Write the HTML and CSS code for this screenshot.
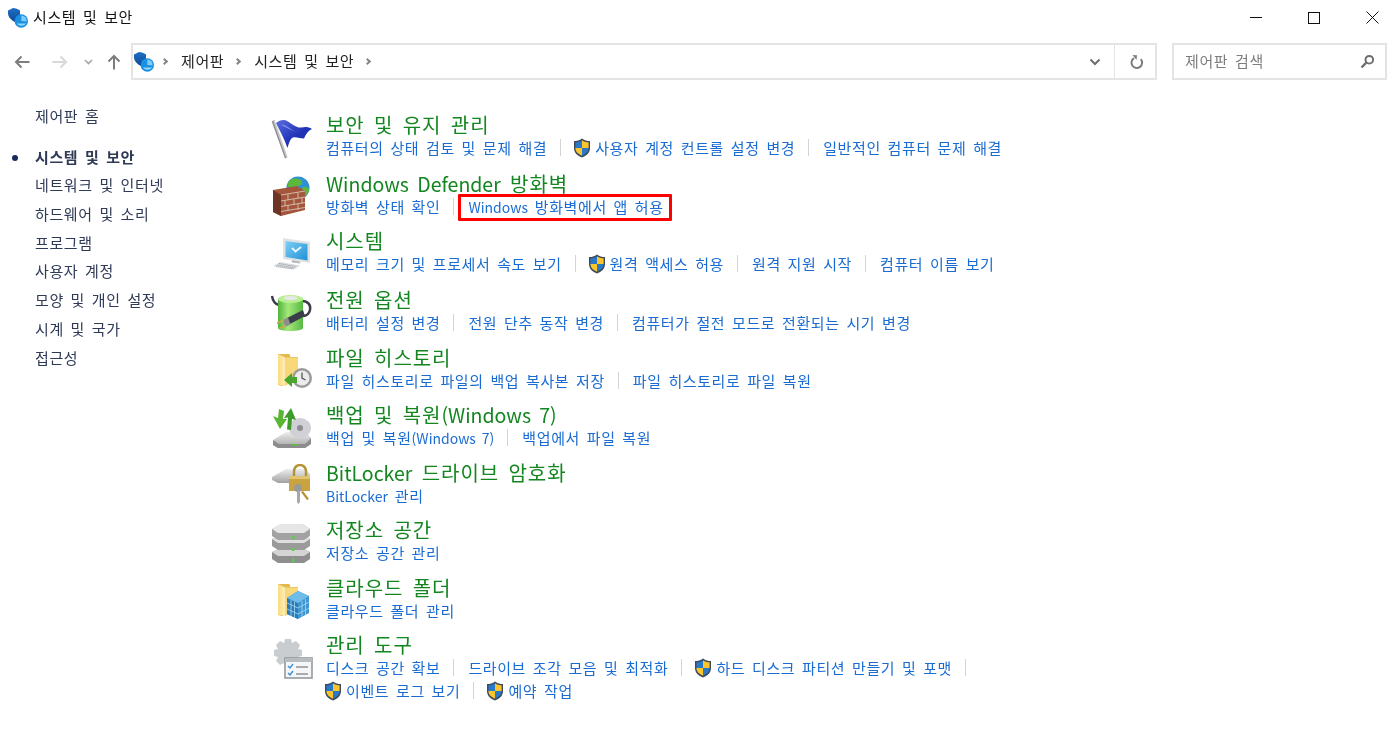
FILE: index.html
```html
<!DOCTYPE html>
<html lang="ko">
<head>
<meta charset="utf-8">
<title>시스템 및 보안</title>
<link rel="stylesheet" href="styles.css">
</head>
<body>
<svg class="defs" width="0" height="0" aria-hidden="true">
  <defs>
    <linearGradient id="gBlue" x1="0" y1="0" x2="0" y2="1"><stop offset="0" stop-color="#1f6fc4"/><stop offset="1" stop-color="#0b4590"/></linearGradient>
    <linearGradient id="gFlag" x1="0" y1="0" x2="1" y2="1"><stop offset="0" stop-color="#5a6fe0"/><stop offset=".55" stop-color="#2233b8"/><stop offset="1" stop-color="#1a2a9e"/></linearGradient>
    <linearGradient id="gFolder" x1="0" y1="0" x2="1" y2="0"><stop offset="0" stop-color="#f9dc80"/><stop offset="1" stop-color="#fdeeb6"/></linearGradient>
    <linearGradient id="gGreen" x1="0" y1="0" x2="1" y2="0"><stop offset="0" stop-color="#4fb33c"/><stop offset=".4" stop-color="#a5e87a"/><stop offset="1" stop-color="#57b844"/></linearGradient>
    <linearGradient id="gDisk" x1="0" y1="0" x2="0" y2="1"><stop offset="0" stop-color="#ededed"/><stop offset="1" stop-color="#a2a2a2"/></linearGradient>
    <linearGradient id="gScreen" x1="0" y1="0" x2="1" y2="1"><stop offset="0" stop-color="#7fd0f5"/><stop offset="1" stop-color="#1f8fd6"/></linearGradient>
    <symbol id="shield" viewBox="0 0 18 20">
      <path d="M9 .5C6.500 2.500 4 3 1 3v7c0 5 3.500 7.700 8 9.500 4.500-1.800 8-4.500 8-9.500V3c-3 0-5.500-.5-8-2.500z" fill="#3d4a5c"/>
      <path d="M9 2.200V10H2.400V4.300C5 4.200 7 3.600 9 2.200z" fill="#2b78c8"/>
      <path d="M9 2.200V10h6.600V4.300C13 4.200 11 3.600 9 2.200z" fill="#fbc62c"/>
      <path d="M9 10H2.400c.1 3.800 2.800 6 6.600 7.800z" fill="#fbc62c"/>
      <path d="M9 10h6.600c-.1 3.800-2.800 6-6.600 7.800z" fill="#2b78c8"/>
    </symbol>
    <symbol id="cp" viewBox="0 0 20 20">
      <path d="M0 2.500 5 0c2.500.2 5 1 7 2.500V9l3 3-4 4-6-3C2 11 0 8 0 5.500z" fill="url(#gBlue)"/>
      <circle cx="13.300" cy="13" r="6.700" fill="#1b8fe0"/>
      <path d="M13.300 13V7.500a5.500 5.500 0 0 1 5.300 6z" fill="#7fcdf6"/>
      <path d="M8.800 15.500h9.500a6 6 0 0 1-9.500 0z" fill="#8fd8f8"/>
    </symbol>
    <symbol id="folder" viewBox="0 0 44 44">
      <path d="M8 5h11.500l1 3H28v22L12 37l-4-1z" fill="#e3b94f"/>
      <path d="M8 5l7 3.500V37l-7-1.500z" fill="url(#gFolder)"/>
      <path d="M15 8.500h13V30l-13 7z" fill="#f8d878"/>
    </symbol>
  </defs>
</svg>

<header class="titlebar">
  <div class="title">
    <svg class="title-icon"><use href="#cp"/></svg>
    <span class="title-text">시스템 및 보안</span>
  </div>
  <div class="winbtns">
    <button class="winbtn" aria-label="최소화"><svg width="12" height="12" viewBox="0 0 12 12"><path d="M0 5.500h12" stroke="#111" fill="none"/></svg></button>
    <button class="winbtn" aria-label="최대화"><svg width="12" height="12" viewBox="0 0 12 12"><rect x=".5" y=".5" width="11" height="11" stroke="#111" fill="none"/></svg></button>
    <button class="winbtn" aria-label="닫기"><svg width="13" height="13" viewBox="0 0 13 13"><path d="M.5.500l12 12M12.500.500l-12 12" stroke="#111" fill="none"/></svg></button>
  </div>
</header>

<nav class="toolbar">
  <div class="navbtns">
    <svg class="nav-back" width="16" height="14" viewBox="0 0 16 14"><path d="M15.500 7H2M7.500 1.500 2 7l5.500 5.500" stroke="#7d7d7d" stroke-width="2" fill="none"/></svg>
    <svg class="nav-forward" width="16" height="14" viewBox="0 0 16 14"><path d="M.5 7H14M8.500 1.500 14 7l-5.500 5.500" stroke="#d8d8d8" stroke-width="2" fill="none"/></svg>
    <svg class="nav-down" width="9" height="6" viewBox="0 0 9 6"><path d="M1 1l3.500 3.500L8 1" stroke="#a6a6a6" stroke-width="1.600" fill="none"/></svg>
    <svg class="nav-up" width="14" height="16" viewBox="0 0 14 16"><path d="M7 15.500V2M1.500 7.500 7 2l5.500 5.500" stroke="#7d7d7d" stroke-width="2" fill="none"/></svg>
  </div>
  <div class="address">
    <svg class="addr-icon"><use href="#cp"/></svg>
    <span class="crumb-sep"></span>
    <span class="crumb">제어판</span>
    <span class="crumb-sep"></span>
    <span class="crumb">시스템 및 보안</span>
    <span class="crumb-sep"></span>
    <span class="addr-fill"></span>
    <svg class="addr-down" width="12" height="8" viewBox="0 0 12 8"><path d="M1.500 1.500 6 6l4.500-4.500" stroke="#6f6f6f" stroke-width="2" fill="none"/></svg>
    <span class="addr-refresh">
      <svg width="14" height="16" viewBox="0 0 14 16"><path d="M10.800 5.200A5.300 5.300 0 1 1 4 4.200" stroke="#7d7d7d" stroke-width="2" fill="none"/><path d="M2.500 1 7 1.200 6.500 6z" fill="#7d7d7d"/></svg>
    </span>
  </div>
  <div class="search">
    <span class="search-text">제어판 검색</span>
    <svg width="15" height="15" viewBox="0 0 15 15"><circle cx="9.300" cy="5.700" r="3.800" stroke="#6f6f6f" stroke-width="2" fill="none"/><path d="M6.300 8.700 1.500 13.500" stroke="#6f6f6f" stroke-width="2.400"/></svg>
  </div>
</nav>

<div class="content">
  <aside class="sidebar">
    <a class="side home">제어판 홈</a>
    <a class="side current">시스템 및 보안</a>
    <a class="side">네트워크 및 인터넷</a>
    <a class="side">하드웨어 및 소리</a>
    <a class="side">프로그램</a>
    <a class="side">사용자 계정</a>
    <a class="side">모양 및 개인 설정</a>
    <a class="side">시계 및 국가</a>
    <a class="side">접근성</a>
  </aside>

  <main class="categories">
    <section class="category tall">
      <svg class="cat-icon" viewBox="0 0 44 44">
        <path d="M1.700 5.500 4 4l13 37.500-2 1z" fill="#8e8e8e"/>
        <path d="M3 4.500l1.500-.8 13 37-1.500.8z" fill="#c8c8c8"/>
        <path d="M6 7c4-3 8-4 12-1.500S27 12 31 11.500s7-1 11 1.500c-4 1.500-6 5-8 9.500-4 0-8-2-11-1s-4 6-5.500 10.500C14 22 10 15 6 7z" fill="url(#gFlag)"/>
        <path d="M11 9c4-1 8 3 11 5s7 2 9 1c-3 1-6 1-10-1S14 10 11 9z" fill="#8795ee"/>
      </svg>
      <div class="cat-body">
        <h2>보안 및 유지 관리</h2>
        <div class="links">
          <a class="link">컴퓨터의 상태 검토 및 문제 해결</a>
          <a class="link"><svg class="shield"><use href="#shield"/></svg>사용자 계정 컨트롤 설정 변경</a>
          <a class="link">일반적인 컴퓨터 문제 해결</a>
        </div>
      </div>
    </section>

    <section class="category short">
      <svg class="cat-icon" viewBox="0 0 44 44">
        <circle cx="28" cy="13" r="11.500" fill="#2f8fd8"/>
        <path d="M20 5c4-2 9-2 12 1 1 3-2 5-5 5s-4 3-7 2-3-5 0-8zM33 12c3-1 6 0 6 3s-3 6-5 6-3-6-1-9z" fill="#5cb83a"/>
        <path d="M3 15l24-4 8 5v19L11 41l-8-4z" fill="#a3563c"/>
        <path d="M3 15l8 5v21l-8-4z" fill="#6e3526"/>
        <path d="M11 20l24-4M11 26l24-4M11 31.500l24-4M11 36.500l24-4M18 19v6M28 17.500v6M15 25v6M24 24v6M32 23v6M18 30v6M28 29v6" stroke="#d6b8a8" stroke-width="1" fill="none"/>
      </svg>
      <div class="cat-body">
        <h2><span class="en">Windows Defender</span> 방화벽</h2>
        <div class="links">
          <a class="link">방화벽 상태 확인</a>
          <a class="link"><span><span class="en">Windows</span> 방화벽에서 앱 허용</span><span class="highlight"></span></a>
        </div>
      </div>
    </section>

    <section class="category tall">
      <svg class="cat-icon" viewBox="0 0 44 44">
        <path d="M13 6l27 4v21l-27-4z" fill="#dfe3e6"/>
        <path d="M15.500 9 37.500 12v16.500L15.500 25z" fill="url(#gScreen)"/>
        <path d="M22 16l3.500 3.500L31 15" stroke="#e8f7ff" stroke-width="2" fill="none"/>
        <path d="M22 28l8 1.500.5 2-9-1z" fill="#b7bcc0"/>
        <path d="M10 30l20 3.500-6 4L3 34z" fill="#d9dcde"/>
        <path d="M9 31.500l17 3M7.500 33l17 3M6 34.500l17 2.500" stroke="#9aa0a4" stroke-width=".8" stroke-dasharray="1.500 .6" fill="none"/>
      </svg>
      <div class="cat-body">
        <h2>시스템</h2>
        <div class="links">
          <a class="link">메모리 크기 및 프로세서 속도 보기</a>
          <a class="link"><svg class="shield"><use href="#shield"/></svg>원격 액세스 허용</a>
          <a class="link">원격 지원 시작</a>
          <a class="link">컴퓨터 이름 보기</a>
        </div>
      </div>
    </section>

    <section class="category">
      <svg class="cat-icon" viewBox="0 0 44 44">
        <path d="M2 5c1 6 3 8 7 9M32 10c6 0 9 4 8 9-1 4-4 6-7 6" stroke="#3b3b4a" stroke-width="2.500" fill="none"/>
        <path d="M8 8c0-3 25-3 25 0v29c0 4-25 4-25 0z" fill="url(#gGreen)"/>
        <ellipse cx="20.500" cy="8" rx="12.500" ry="4" fill="#b9ee94"/>
        <ellipse cx="20.500" cy="7" rx="7" ry="2" fill="#e8e8e8"/>
        <path d="M17 27l16-8 2 6-15 8z" fill="#3a3d4a"/>
        <path d="M13 29l5-2.500 2.500 7L15 36z" fill="#8c8c8c"/>
        <path d="M7 31l7-3v2l-7 3zM9 36.500l7-3v2l-7 3z" fill="#c7a84f"/>
      </svg>
      <div class="cat-body">
        <h2>전원 옵션</h2>
        <div class="links">
          <a class="link">배터리 설정 변경</a>
          <a class="link">전원 단추 동작 변경</a>
          <a class="link">컴퓨터가 절전 모드로 전환되는 시기 변경</a>
        </div>
      </div>
    </section>

    <section class="category short">
      <svg class="cat-icon" viewBox="0 0 44 44">
        <use href="#folder"/>
        <circle cx="32" cy="29" r="10" fill="#9b9b9b"/>
        <circle cx="32" cy="29" r="7.500" fill="#ececec"/>
        <path d="M32 23.500V29l3.500 2" stroke="#555" stroke-width="1.300" fill="none"/>
        <path d="M14 31l8-7v4h5v6h-5v4z" fill="#4aa52e"/>
      </svg>
      <div class="cat-body">
        <h2>파일 히스토리</h2>
        <div class="links">
          <a class="link">파일 히스토리로 파일의 백업 복사본 저장</a>
          <a class="link">파일 히스토리로 파일 복원</a>
        </div>
      </div>
    </section>

    <section class="category">
      <svg class="cat-icon" viewBox="0 0 44 44">
        <path d="M3 34l13-8h20l5 6v6l-6 4H8l-5-3z" fill="url(#gDisk)"/>
        <path d="M3 34l6 4h26l6-6v6l-6 4H8l-5-3z" fill="#8d8d8d"/>
        <ellipse cx="30" cy="22" rx="11" ry="10" fill="#d0d0d6"/>
        <circle cx="30" cy="22" r="3" fill="#8c8c94"/>
        <path d="M22 38h6v1.500h-6z" fill="#54c83a"/>
        <path d="M9 3l-1 9-5-2 7 13 7-10-4 0 1-8z" fill="#5bb534"/>
        <path d="M21 24l1-11 4 1-5-12-7 10 4-.5-1 12z" fill="#3e9c2a"/>
      </svg>
      <div class="cat-body">
        <h2>백업 및 복원<span class="en">(Windows 7)</span></h2>
        <div class="links">
          <a class="link"><span>백업 및 복원<span class="en">(Windows 7)</span></span></a>
          <a class="link">백업에서 파일 복원</a>
        </div>
      </div>
    </section>

    <section class="category short">
      <svg class="cat-icon" viewBox="0 0 44 44">
        <path d="M2 13l14-8h19l5 5v6l-5 3H8l-6-3z" fill="url(#gDisk)"/>
        <path d="M24 12V7a6 6 0 0 1 12 0v6" stroke="#b49336" stroke-width="2.500" fill="none"/>
        <path d="M19 12h21v15H19z" fill="#c9a33f"/>
        <path d="M19 12h21v3H19z" fill="#e0c470"/>
        <circle cx="28" cy="24" r="4" fill="#9a9a9a"/>
        <path d="M27 27h3v11l-1.500 2-1.500-2z" fill="#a8a8a8"/>
        <path d="M33 27l6 8-2 1-6-8z" fill="#b78d2f"/>
      </svg>
      <div class="cat-body">
        <h2><span class="en">BitLocker</span> 드라이브 암호화</h2>
        <div class="links">
          <a class="link"><span><span class="en">BitLocker</span> 관리</span></a>
        </div>
      </div>
    </section>

    <section class="category">
      <svg class="cat-icon" viewBox="0 0 44 44">
        <path d="M2 31l10-4h20l8 4v7l-6 4H8l-6-4z" fill="#8f8f8f"/>
        <path d="M2 31l8-4h22l8 4-6 4H8z" fill="#d4d4d4"/>
        <path d="M2 18l10-4h20l8 4v7l-6 4H8l-6-4z" fill="#9a9a9a"/>
        <path d="M2 18l8-4h22l8 4-6 4H8z" fill="#dedede"/>
        <path d="M2 8l10-5h20l8 5v7l-6 4H8l-6-4z" fill="#a2a2a2"/>
        <path d="M2 8l8-5h22l8 5-6 4H8z" fill="#e6e6e6"/>
        <path d="M22 15h2.500v3H22zM22 27h2.500v3H22zM22 38h2.500v3H22z" fill="#58d04a"/>
      </svg>
      <div class="cat-body">
        <h2>저장소 공간</h2>
        <div class="links">
          <a class="link">저장소 공간 관리</a>
        </div>
      </div>
    </section>

    <section class="category short">
      <svg class="cat-icon" viewBox="0 0 44 44">
        <use href="#folder"/>
        <path d="M17 19l11-7 11 5v17l-11 6-11-5z" fill="#3f96d2"/>
        <path d="M17 19l11 5v16l-11-5z" fill="#2a7bb8"/>
        <path d="M17 19l11-7 11 5-11 7z" fill="#6ebce8"/>
        <path d="M17 24l11 5 11-6M17 30l11 5 11-6M21 21v16M24.500 22.500v16M32 22v16M35.500 20v16" stroke="#a6d9f3" stroke-width=".8" fill="none"/>
      </svg>
      <div class="cat-body">
        <h2>클라우드 폴더</h2>
        <div class="links">
          <a class="link">클라우드 폴더 관리</a>
        </div>
      </div>
    </section>

    <section class="category">
      <svg class="cat-icon" viewBox="0 0 44 44">
        <path d="M15 3h6l1 4 4-2 4 4-2 4 4 1v6l-4 1 2 4-4 4-4-2-1 4h-6l-1-4-4 2-4-4 2-4-4-1v-6l4-1-2-4 4-4 4 2z" fill="#c9cdd0"/>
        <path d="M15 22h27v20H15z" fill="#f4f6f7" stroke="#8f9498" stroke-width="1.500"/>
        <path d="M15 22h27v4H15z" fill="#b6bcc0"/>
        <path d="M18 30l2 2 3-4M18 37l2 2 3-4" stroke="#3f8fd6" stroke-width="1.400" fill="none"/>
        <path d="M26 31h12M26 38h12" stroke="#8f9498" stroke-width="1.400"/>
      </svg>
      <div class="cat-body">
        <h2>관리 도구</h2>
        <div class="links">
          <a class="link">디스크 공간 확보</a>
          <a class="link">드라이브 조각 모음 및 최적화</a>
          <a class="link"><svg class="shield"><use href="#shield"/></svg>하드 디스크 파티션 만들기 및 포맷</a>
          <a class="link"><svg class="shield"><use href="#shield"/></svg>이벤트 로그 보기</a>
          <a class="link"><svg class="shield"><use href="#shield"/></svg>예약 작업</a>
        </div>
      </div>
    </section>
  </main>
</div>
</body>
</html>
```

FILE: styles.css
```css
* { box-sizing: border-box; }

html, body {
  margin: 0;
  height: 100%;
  background: #fff;
  overflow: hidden;
}

body {
  font-family: "Noto Sans CJK KR", "Noto Sans", sans-serif;
  font-size: 15px;
  letter-spacing: .6px;
  word-spacing: 2px;
  color: #1a1a1a;
  filter: blur(.3px);
}

.en { font-size: 14px; letter-spacing: 0; }

.defs { position: absolute; }

/* title bar */
.titlebar {
  display: flex;
  justify-content: space-between;
  height: 43px;
}

.title {
  display: flex;
  align-items: center;
  gap: 5px;
  height: 35px;
  padding-left: 8px;
  color: #111;
}

.title-text { margin-top: -3px; }

.title-icon { width: 20px; height: 20px; }

.winbtns { display: flex; margin-right: -1px; }

.winbtn {
  display: flex;
  align-items: center;
  justify-content: center;
  width: 58px;
  height: 35px;
  padding: 0;
  border: 0;
  background: none;
}

/* toolbar */
.toolbar {
  display: flex;
  height: 37px;
  padding-right: 13px;
}

.navbtns {
  display: flex;
  align-items: center;
  width: 131px;
  padding-left: 14px;
}

.nav-forward { margin-left: 22px; }
.nav-down { margin-left: 16px; }
.nav-up { margin-left: 14px; }

.address {
  display: flex;
  align-items: center;
  flex: 1;
  border: 2px solid #e4e4e4;
  padding-left: 1px;
}

.addr-icon { width: 20px; height: 20px; margin-right: -3px; }

.crumb { color: #222; margin-top: -2px; }

.crumb-sep {
  width: 5px;
  height: 5px;
  margin: 0 14px 0 11px;
  border-top: 2px solid #858585;
  border-right: 2px solid #858585;
  transform: rotate(45deg);
}

.addr-fill { flex: 1; }
.addr-down { margin-right: 13px; }

.addr-refresh {
  display: flex;
  align-items: center;
  justify-content: center;
  width: 41px;
  height: 100%;
  padding-left: 3px;
  border-left: 1px solid #e4e4e4;
}

.search {
  display: flex;
  align-items: center;
  justify-content: space-between;
  width: 215px;
  margin-left: 15px;
  padding: 0 10px 0 11px;
  border: 2px solid #e4e4e4;
  color: #7d7d7d;
}

.search-text { margin-top: -3px; }

/* main */
.content {
  display: flex;
  padding-top: 25px;
}

.sidebar {
  display: flex;
  flex-direction: column;
  width: 270px;
  margin-top: -3px;
  padding-left: 35px;
}

.side {
  height: 28.700px;
  line-height: 28px;
  color: #2f3a57;
  white-space: nowrap;
}

.home { margin-bottom: 12px; }

.current {
  position: relative;
  font-weight: 700;
}

.current::before {
  content: "";
  position: absolute;
  left: -23px;
  top: 12px;
  width: 6px;
  height: 6px;
  border-radius: 50%;
  background: #1b2a5c;
}

.categories {
  display: flex;
  flex-direction: column;
  padding-top: 10px;
}

.category {
  display: flex;
  height: 58px;
}

.category.tall { height: 59px; }
.category.short { height: 57px; }

.cat-icon {
  flex: none;
  width: 44px;
  height: 44px;
  margin: 1px 12px 0 0;
}

.cat-body { flex: 1; }

h2 {
  margin: 0;
  height: 20px;
  line-height: 20px;
  font-size: 20px;
  font-weight: 400;
  letter-spacing: .95px;
  word-spacing: 2.800px;
  color: #13861f;
  white-space: nowrap;
}

h2 .en { font-size: 19.500px; letter-spacing: 0; }

.links {
  display: flex;
  flex-wrap: wrap;
  width: 720px;
  margin-top: 1px;
}

.link {
  display: flex;
  align-items: center;
  position: relative;
  height: 23px;
  line-height: 20px;
  color: #1a6cd2;
  white-space: nowrap;
}

.link:not(:last-child) {
  margin-right: 14px;
  padding-right: 14px;
}

.link:not(:last-child)::after {
  content: "";
  position: absolute;
  right: 0;
  top: 3px;
  width: 1px;
  height: 17px;
  background: #d4d4d4;
}

.shield {
  flex: none;
  width: 18px;
  height: 20px;
  margin: 0 4px 0 -2px;
}

.highlight {
  position: absolute;
  left: -10px;
  right: -8px;
  top: -1px;
  height: 27px;
  border: 3px solid #f00;
  border-radius: 1px;
}
```
